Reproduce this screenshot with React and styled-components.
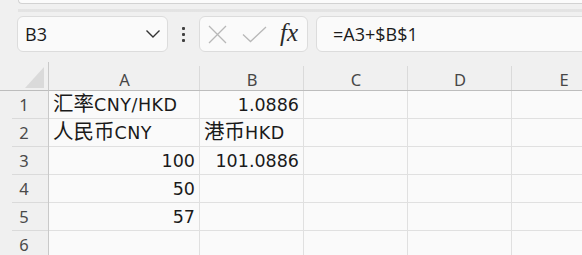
import React from 'react';
import styled, { createGlobalStyle } from 'styled-components';

const GlobalStyle = createGlobalStyle`
  html, body {
    margin: 0;
    padding: 0;
    background: #f0f0f0;
    overflow: hidden;
  }
`;

const Page = styled.div`
  width: 582px;
  height: 255px;
  overflow: hidden;
  background: #f0f0f0;
  font-family: "Open Sans", "Noto Sans", sans-serif;
`;

const TopPanel = styled.div`
  margin-left: 18px;
  height: 3px;
  background: #fbfbfb;
  border: 1px solid #d2d2d2;
  border-top: none;
  border-right: none;
  border-bottom-left-radius: 6px;
`;

const DotStrip = styled.div`
  margin: 5px 0 0 18px;
  height: 3px;
  background-image: radial-gradient(circle, #dcdcdc 0.6px, transparent 0.9px);
  background-size: 2px 2px;
`;

const FormulaBar = styled.div`
  display: flex;
  align-items: stretch;
  height: 36px;
  margin-top: 4px;
  padding-left: 17px;
`;

const Box = styled.div`
  display: flex;
  align-items: center;
  box-sizing: border-box;
  background: #fafafa;
  border: 1px solid #dcdcdc;
  border-radius: 6px;
`;

const NameBox = styled(Box)`
  width: 151px;
  padding: 0 6px 0 7px;
  justify-content: space-between;
  font-size: 18px;
  color: #1a1a1a;
`;

const Grip = styled.div`
  width: 31px;
  display: flex;
  flex-direction: column;
  align-items: center;
  justify-content: center;
  gap: 3px;

  span {
    width: 3px;
    height: 3px;
    border-radius: 1px;
    background: #404040;
  }
`;

const ButtonBox = styled(Box)`
  width: 109px;
  padding-left: 8px;
  gap: 15px;
`;

const Fx = styled.span`
  font-family: "Liberation Serif", "DejaVu Serif", serif;
  font-style: italic;
  font-size: 25px;
  color: #2a2a2a;
  margin-left: -2px;
  line-height: 1;
  padding-bottom: 3px;
`;

const FormulaInput = styled(Box)`
  flex: 1;
  margin-left: 8px;
  margin-right: -12px;
  padding-left: 16px;
  font-size: 18px;
  color: #1a1a1a;
`;

const Sheet = styled.div`
  margin-top: 10px;
  display: grid;
  grid-template-columns: 49px 151px 104px 104px 104px 104px;
  grid-auto-rows: 28px;
  grid-template-rows: 29px;
  width: 640px;
`;

const Corner = styled.div`
  box-sizing: border-box;
  background: #f0f0f0;
  border-right: 1px solid #c9c9c9;
  border-bottom: 1px solid #bdbdbd;
  display: flex;
  align-items: flex-end;
  justify-content: flex-end;
  padding: 0 4px 2px 0;

  span {
    width: 19px;
    height: 21px;
    background: #dadada;
    clip-path: polygon(100% 0, 100% 100%, 0 100%);
  }
`;

const ColHead = styled.div`
  box-sizing: border-box;
  background: #f0f0f0 linear-gradient(#dadada, #dadada) right bottom / 1px calc(100% - 4px) no-repeat;
  border-bottom: 1px solid #bdbdbd;
  display: flex;
  align-items: center;
  justify-content: center;
  padding-top: 7px;
  font-family: "Noto Sans", "Open Sans", sans-serif;
  font-size: 16.5px;
  color: #474747;
`;

const RowHead = styled.div`
  box-sizing: border-box;
  background: #f0f0f0 linear-gradient(#dadada, #dadada) right bottom / calc(100% - 12px) 1px no-repeat;
  border-right: 1px solid #c9c9c9;
  display: flex;
  align-items: center;
  justify-content: center;
  padding-bottom: 1px;
  font-family: "Noto Sans", "Open Sans", sans-serif;
  font-size: 16.5px;
  color: #4a4a4a;
`;

const Cell = styled.div`
  box-sizing: border-box;
  background: #fafafa;
  border-right: 1px solid #e0e0e0;
  border-bottom: 1px solid #e0e0e0;
  display: flex;
  align-items: flex-end;
  justify-content: ${(p) => (p.$right ? 'flex-end' : 'flex-start')};
  padding: 0 4px 1px 4px;
  white-space: nowrap;
  overflow: visible;
  font-family: "DejaVu Sans", "Noto Sans CJK SC", sans-serif;
  font-size: 17.5px;
  line-height: 24px;
  color: #1a1a1a;
`;

const Text = styled.span`
  display: block;
  line-height: 24px;
`;

const Latin = styled.span`
  letter-spacing: ${(p) => (p.$wide ? '0.5px' : '0')};
`;

const Cjk = styled.span`
  font-family: "Noto Sans CJK SC", sans-serif;
  font-size: 20.5px;
`;

const columns = ['A', 'B', 'C', 'D', 'E'];

const rows = [
  ['汇率CNY/HKD', '1.0886'],
  ['人民币CNY', '港币HKD'],
  ['100', '101.0886'],
  ['50', ''],
  ['57', ''],
  ['', ''],
];

const isNumber = (v) => v !== '' && !isNaN(Number(v));

function CellText({ value }) {
  const parts = value.match(/[\u4e00-\u9fff]+|[^\u4e00-\u9fff]+/g) || [];
  return (
    <Text>
      {parts.map((part, i) =>
        /[\u4e00-\u9fff]/.test(part) ? (
          <Cjk key={i}>{part}</Cjk>
        ) : (
          <Latin key={i} $wide={/[A-Za-z]/.test(part)}>{part}</Latin>
        )
      )}
    </Text>
  );
}

function Chevron() {
  return (
    <svg width="16" height="10" viewBox="0 0 16 10">
      <path d="M1.5 1.5 L8 8 L14.5 1.5" fill="none" stroke="#333" strokeWidth="1.4" />
    </svg>
  );
}

function Cancel() {
  return (
    <svg width="19" height="19" viewBox="0 0 19 19">
      <path d="M1 1 L18 18 M18 1 L1 18" fill="none" stroke="#b8b8b8" strokeWidth="1.3" />
    </svg>
  );
}

function Confirm() {
  return (
    <svg width="25" height="17" viewBox="0 0 25 17">
      <path d="M1 8.5 L8.5 15.5 L24 1" fill="none" stroke="#b8b8b8" strokeWidth="1.3" />
    </svg>
  );
}

export default function App() {
  return (
    <Page>
      <GlobalStyle />
      <TopPanel />
      <DotStrip />
      <FormulaBar>
        <NameBox>
          <span>B3</span>
          <Chevron />
        </NameBox>
        <Grip>
          <span />
          <span />
          <span />
        </Grip>
        <ButtonBox>
          <Cancel />
          <Confirm />
          <Fx>fx</Fx>
        </ButtonBox>
        <FormulaInput>=A3+$B$1</FormulaInput>
      </FormulaBar>
      <Sheet>
        <Corner>
          <span />
        </Corner>
        {columns.map((c) => (
          <ColHead key={c}>{c}</ColHead>
        ))}
        {rows.map((row, r) => (
          <React.Fragment key={r}>
            <RowHead>{r + 1}</RowHead>
            {columns.map((c, ci) => {
              const v = row[ci] || '';
              return (
                <Cell key={c} $right={isNumber(v)}>
                  <CellText value={v} />
                </Cell>
              );
            })}
          </React.Fragment>
        ))}
      </Sheet>
    </Page>
  );
}
